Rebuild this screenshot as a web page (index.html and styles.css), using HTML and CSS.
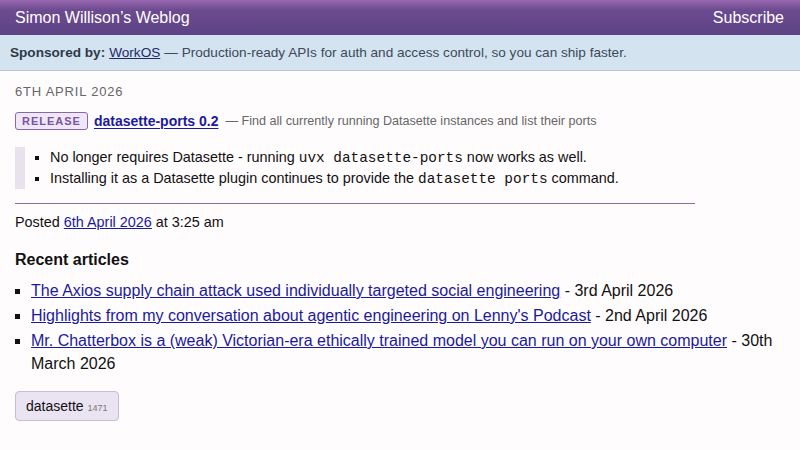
FILE: index.html
```html
<!DOCTYPE html>
<html>
<head>
<meta charset="utf-8">
<link rel="stylesheet" href="styles.css">
</head>
<body>
<header class="top">
  <a class="site-title" href="#">Simon Willison’s Weblog</a>
  <a class="subscribe" href="#">Subscribe</a>
</header>
<div class="sponsor">
  <strong>Sponsored by:</strong> <a href="#">WorkOS</a> — Production-ready APIs for auth and access control, so you can ship faster.
</div>
<main class="content">
  <div class="entry">
    <p class="date">6th April 2026</p>
    <p class="release-line">
      <span class="badge">Release</span>
      <a class="release-link" href="#">datasette-ports 0.2</a>
      <span class="release-desc">— Find all currently running Datasette instances and list their ports</span>
    </p>
    <blockquote class="notes">
      <ul>
        <li>No longer requires Datasette - running <code>uvx datasette-ports</code> now works as well.</li>
        <li>Installing it as a Datasette plugin continues to provide the <code>datasette ports</code> command.</li>
      </ul>
    </blockquote>
    <hr class="divider">
    <p class="posted">Posted <a href="#">6th April 2026</a> at 3:25 am</p>
  </div>
  <h3 class="recent-title">Recent articles</h3>
  <ul class="recent">
    <li><a href="#">The Axios supply chain attack used individually targeted social engineering</a> - 3rd April 2026</li>
    <li><a href="#">Highlights from my conversation about agentic engineering on Lenny's Podcast</a> - 2nd April 2026</li>
    <li><a href="#">Mr. Chatterbox is a (weak) Victorian-era ethically trained model you can run on your own computer</a> - 30th March 2026</li>
  </ul>
  <div class="tags">
    <a class="tag" href="#">datasette <span class="count">1471</span></a>
  </div>
</main>
</body>
</html>
```
FILE: styles.css
```css
html, body {
  margin: 0;
  padding: 0;
}
body {
  background: #fffcfe;
  font-family: "Liberation Sans", Arial, Helvetica, sans-serif;
  color: #111;
}
.top {
  height: 35px;
  box-sizing: border-box;
  display: flex;
  align-items: center;
  justify-content: space-between;
  padding: 0 16px 0 15px;
  background: linear-gradient(to bottom, #9a68b0 0px, #6c4b8f 10px, #5d4385 35px);
}
.top a {
  color: #fff;
  text-decoration: none;
  font-size: 16px;
}
.sponsor {
  height: 36px;
  box-sizing: border-box;
  background: #d4e3f0;
  border-bottom: 1px solid #b2c6d8;
  padding: 0 10px;
  display: flex;
  align-items: center;
  font-size: 13.6px;
  color: #3d4a58;
  white-space: nowrap;
}
.sponsor strong {
  color: #2e3a48;
  margin-right: 4px;
}
.sponsor a {
  color: #1e2a68;
  text-decoration: underline;
  margin-right: 4px;
}
.content {
  padding: 13px 15px 20px;
}
.entry {
  width: 680px;
}
.date {
  margin: 0;
  font-size: 13px;
  text-transform: uppercase;
  letter-spacing: 0.8px;
  color: #666;
  line-height: 16px;
}
.release-line {
  margin: 12px 0 0;
  display: flex;
  align-items: center;
  height: 18px;
}
.badge {
  display: inline-block;
  box-sizing: border-box;
  height: 18px;
  line-height: 16px;
  padding: 0 6px;
  border: 1px solid #8a67a8;
  border-radius: 3px;
  background: #efe6f6;
  color: #7a55a0;
  font-size: 11px;
  font-weight: bold;
  letter-spacing: 1px;
  text-transform: uppercase;
  margin-right: 6px;
}
.release-link {
  color: #1a1a9c;
  font-weight: bold;
  font-size: 14px;
  text-decoration: underline;
  text-underline-offset: 2px;
  margin-right: 7px;
}
.release-desc {
  color: #666;
  font-size: 12.6px;
}
.notes {
  margin: 17px 0 0;
  padding: 0 0 0 15px;
  border-left: 10px solid #e8e2ef;
}
.notes ul {
  margin: 0;
  padding: 0 0 0 10px;
  list-style: square;
  font-size: 14.4px;
  line-height: 21px;
  color: #111;
}
.notes code {
  font-family: "Liberation Mono", "Courier New", monospace;
  font-size: 14.4px;
  line-height: 1;
}
.divider {
  margin: 14px 0 0;
  border: 0;
  border-top: 1px solid #8e6d9e;
  height: 0;
}
.posted {
  margin: 8px 0 0;
  font-size: 14.4px;
  line-height: 20px;
}
.posted a {
  color: #1a1a9c;
}
.recent-title {
  margin: 18px 0 0;
  font-size: 16px;
  line-height: 20px;
  font-weight: bold;
}
.recent {
  margin: 9px 0 0;
  padding: 0 0 0 16px;
  list-style: square;
  font-size: 16px;
  line-height: 23px;
}
.recent li {
  margin: 0 0 2px;
}
.recent a {
  color: #1a1a9c;
}
.tags {
  margin-top: 16px;
  display: flex;
}
.tag {
  display: inline-block;
  box-sizing: border-box;
  height: 30px;
  line-height: 28px;
  padding: 0 10px;
  border: 1px solid #c8bdd3;
  border-radius: 4px;
  background: #eae3f1;
  color: #111;
  font-size: 14px;
  text-decoration: none;
}
.tag .count {
  font-size: 9px;
  color: #777;
}
```
